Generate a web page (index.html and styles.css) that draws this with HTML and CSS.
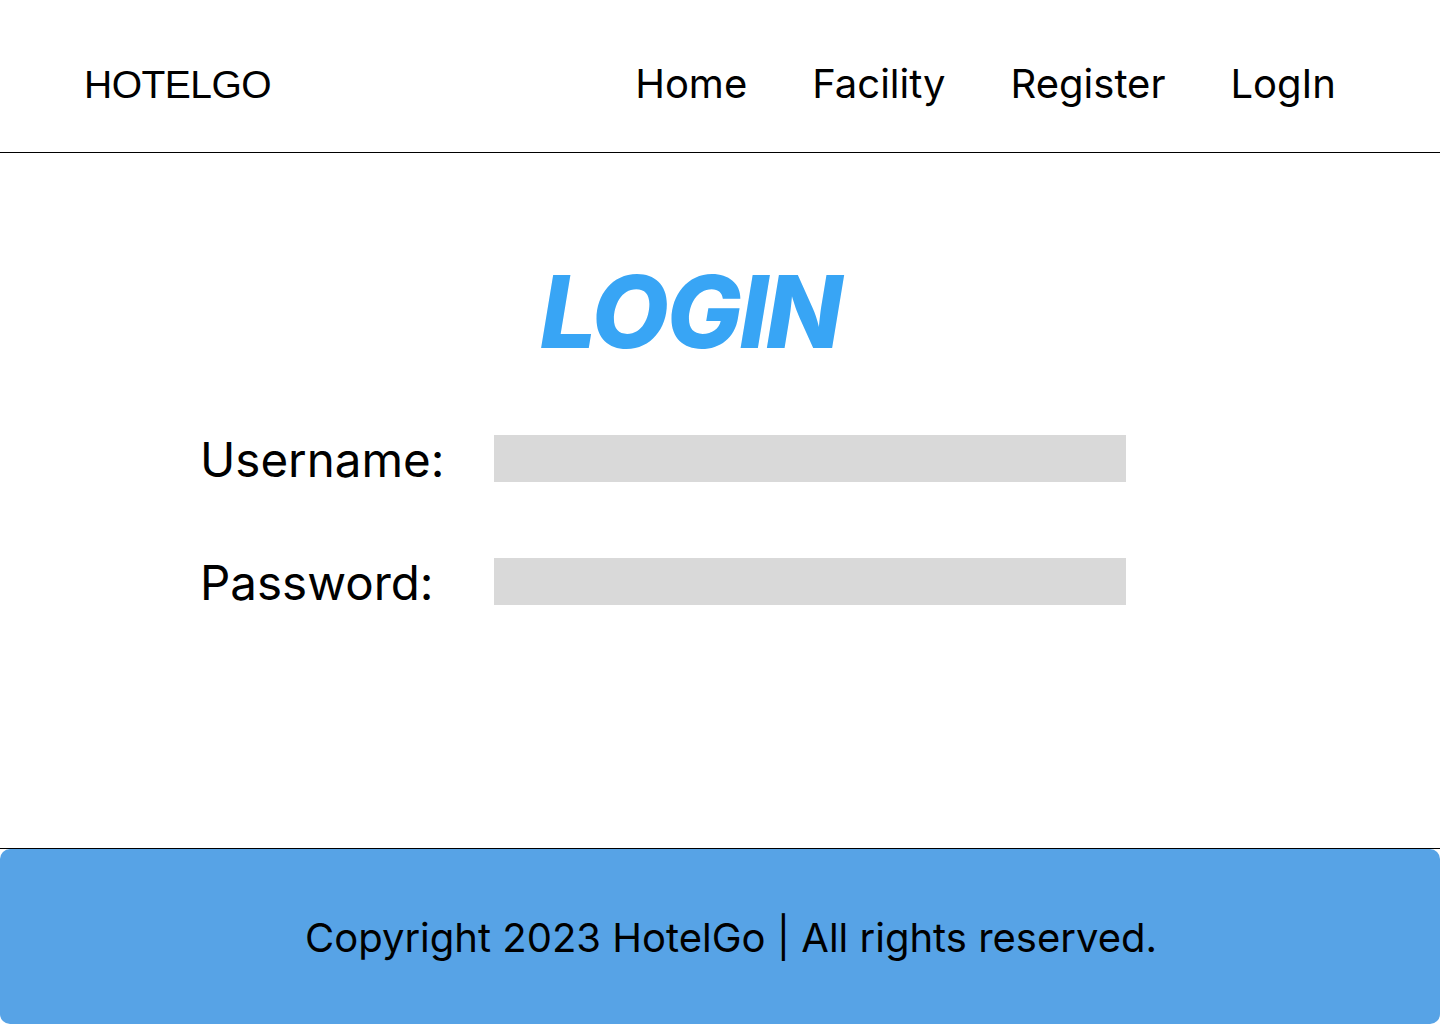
FILE: index.html
```html
<!DOCTYPE html>
<html lang="en">
<head>
<meta charset="utf-8">
<title>HotelGo - Login</title>
<link rel="stylesheet" href="styles.css">
</head>
<body>
<div class="page">
  <header class="header">
    <div class="logo">HOTELGO</div>
    <nav class="nav">
      <a class="nav-link" href="#">Home</a>
      <a class="nav-link" href="#">Facility</a>
      <a class="nav-link" href="#">Register</a>
      <a class="nav-link" href="#">LogIn</a>
    </nav>
  </header>
  <main class="main">
    <h1 class="title">LOGIN</h1>
    <form class="form">
      <div class="row">
        <label class="label" for="username">Username:</label>
        <input class="input" id="username" type="text">
      </div>
      <div class="row">
        <label class="label" for="password">Password:</label>
        <input class="input" id="password" type="password">
      </div>
    </form>
  </main>
  <footer class="footer">
    <div class="footer-box">Copyright 2023 HotelGo | All rights reserved.</div>
  </footer>
</div>
</body>
</html>
```

FILE: styles.css
```css
* { box-sizing: border-box; }
html, body { margin: 0; padding: 0; background: #fff; }
body { font-family: Inter, "Noto Sans", sans-serif; color: #000; }
.page { width: 1440px; height: 1024px; display: flex; flex-direction: column; }

.header {
  height: 153px;
  display: flex;
  align-items: flex-start;
  justify-content: space-between;
  padding: 59px 104px 0 84px;
  border-bottom: 1px solid #000;
}
.logo {
  font-family: "Liberation Sans", Arial, sans-serif;
  font-size: 39px;
  letter-spacing: -0.5px;
  margin-top: 4px;
}
.nav { display: flex; gap: 65px; }
.nav-link {
  color: #000;
  text-decoration: none;
  font-size: 40px;
}

.main {
  flex: 1;
  display: flex;
  flex-direction: column;
  padding: 109px 0 0 200px;
}
.title {
  margin: 0 0 73px 340px;
  font-size: 100px;
  line-height: 100px;
  font-weight: 800;
  font-style: italic;
  color: #38A5F5;
  letter-spacing: -2.3px;
}
.form { display: flex; flex-direction: column; gap: 76px; }
.row { display: flex; align-items: center; height: 47px; }
.label { width: 294px; font-size: 47.5px; margin-top: 1px; }
.input {
  width: 632px;
  height: 47px;
  border: 0;
  background: #D9D9D9;
  padding: 0;
  outline: none;
}

.footer { border-top: 1px solid #000; height: 176px; }
.footer-box {
  height: 175px;
  background: #57A3E6;
  border-radius: 10px;
  display: flex;
  align-items: center;
  justify-content: center;
  padding-left: 22px;
  padding-top: 2px;
  font-size: 40px;
}
```
